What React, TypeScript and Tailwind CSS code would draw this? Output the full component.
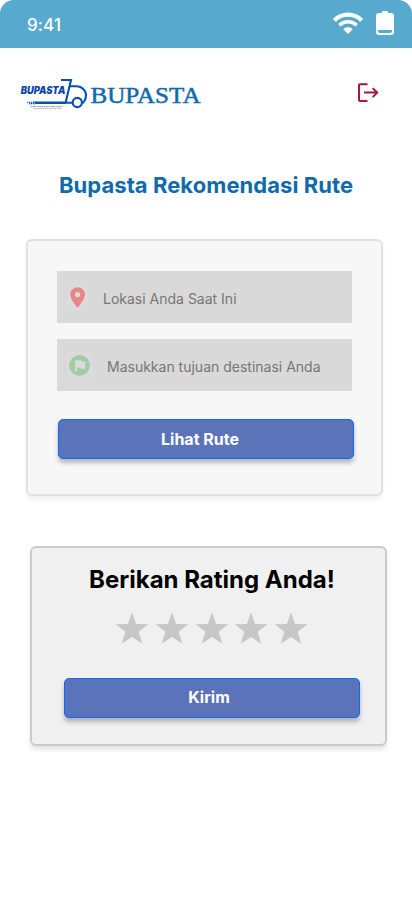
import React from "react";

function StatusBar() {
  return (
    <div className="flex h-12 items-center rounded-t-[14px] bg-[#57a9ce] pr-[18px] pb-[2px] pl-[27px]">
      <span className="mt-1 flex-1 text-[17px] leading-5 font-medium tracking-[0.1px] text-white">9:41</span>
      <svg className="mr-[13px] h-[22px] w-[30px]" viewBox="0 0 30 22" fill="none" stroke="#fff">
        <path d="M1.4 8.4C9 .8 21 .8 28.6 8.4" strokeWidth="4.2" />
        <path d="M6.3 13.2C11.2 8.5 18.8 8.5 23.7 13.2" strokeWidth="3.5" />
        <path d="M10.3 17.3C13 14.7 17 14.7 19.7 17.3L15 22Z" fill="#fff" stroke="none" />
      </svg>
      <svg className="h-6 w-[18px]" viewBox="0 0 18 24">
        <path d="M6 2V1.2Q6 0 7.2 0h3.6Q12 0 12 1.2V2h3Q18 2 18 5v16Q18 24 15 24H3Q0 24 0 21V5Q0 2 3 2Z" fill="#fff" />
        <path d="M2 19h14v1q0 2-2 2H4q-2 0-2-2Z" fill="#57a9ce" />
      </svg>
    </div>
  );
}

function Logo() {
  return (
    <svg className="h-10 w-[184px]" viewBox="20 74 184 40">
      <g fill="none" stroke="#0a4fb3" strokeWidth="2.1">
        <path d="M61 80H71L65.6 102.8H72.5" />
        <path d="M69.8 86.3H77Q84.5 87 86 94.5Q86 100.5 82.2 103.5" />
        <circle cx="77.3" cy="102.5" r="4.6" />
      </g>
      <path d="M33 101.6H66.2L65.8 104H36Z" fill="#0a4fb3" />
      <path d="M27 102.2H34M29 103.6H37" stroke="#0a4fb3" strokeWidth="1.1" strokeDasharray="1.3 .6" />
      <text x="20.8" y="94.4" textLength="44.5" lengthAdjust="spacingAndGlyphs" fill="#0a43a8" fontSize="9.8" fontWeight="900" fontStyle="italic" fontFamily="Inter, sans-serif">BUPASTA</text>
      <path d="M31 106.6H63" stroke="#888" strokeWidth="1" strokeDasharray="1.5 .6 2 .5 1 .7" />
      <path d="M33 108.6H62" stroke="#a5a5a5" strokeWidth=".9" strokeDasharray="1 .6 1.8 .5" />
      <text x="90.5" y="102.8" textLength="110" lengthAdjust="spacingAndGlyphs" fill="#0f6bab" stroke="#0f6bab" strokeWidth=".5" fontSize="23.5" fontFamily="'Liberation Serif', serif">BUPASTA</text>
    </svg>
  );
}

function LogoutIcon() {
  return (
    <svg className="h-5 w-[22px]" viewBox="0 0 22 20" fill="none" stroke="#ad1537" strokeWidth="2">
      <path d="M10.5 1.3H3Q2 1.3 2 2.3V17Q2 18 3 18H10.5M7 9.6H20.2M15.7 5.1L20.2 9.6L15.7 14.1" />
    </svg>
  );
}

function PinIcon() {
  return (
    <span className="flex h-[26px] w-[21px] items-center justify-center bg-[#dbdbdb]">
      <svg className="h-[21px] w-[15px]" viewBox="-.2 0 15.2 21">
        <path fillRule="evenodd" d="M7.5 0A7.4 7.4 0 0 0 .1 7.4C.1 12.5 7.5 21 7.5 21S14.9 12.5 14.9 7.4A7.4 7.4 0 0 0 7.5 0ZM7.5 4.8a2.7 2.7 0 1 1 0 5.4a2.7 2.7 0 0 1 0-5.4Z" fill="#e88585" />
      </svg>
    </span>
  );
}

function FlagIcon() {
  return (
    <span className="flex h-[26px] w-[26px] items-center bg-[#dbdbdb] pl-[2px]">
      <svg className="h-[21px] w-[21px]" viewBox="0 0 21 21">
        <circle cx="10.5" cy="10.5" r="10.4" fill="#a2cca5" />
        <path d="M6.2 5.3H12L12.5 6.5H16.1V13.8H11.5L11 12.5H7.9V16.6H6.2Z" fill="#dbdbdb" />
      </svg>
    </span>
  );
}

function Button({ className, children }: { className: string; children: React.ReactNode }) {
  return (
    <button className={`flex h-10 w-[296px] items-center justify-center rounded-[5px] border border-[#0a69ff] bg-[#5b73b8] text-base leading-5 font-bold text-white shadow-[0_4px_4px_rgba(0,0,0,0.25)] ${className}`}>
      {children}
    </button>
  );
}

function Star() {
  return (
    <svg className="h-8 w-8 overflow-visible" viewBox="0 0 32 32">
      <path d="M16 -.5L20.1 10.9L32.3 11.3L22.7 18.7L26.3 30.8L16 24L5.7 30.8L9.3 18.7L-.3 11.3L11.9 10.9Z" fill="#c7c7c7" />
    </svg>
  );
}

export default function App() {
  return (
    <main className="h-[917px] w-[412px] overflow-hidden bg-white font-['Inter',sans-serif]">
      <StatusBar />
      <header className="flex items-center justify-between pt-[26px] pr-[33px] pl-5">
        <Logo />
        <div className="mb-[3px]"><LogoutIcon /></div>
      </header>
      <h1 className="mt-[57px] text-center text-[22px] leading-7 font-bold tracking-[0.06px] text-[#0f6bab]">Bupasta Rekomendasi Rute</h1>

      <section className="mt-10 ml-[26px] h-[257px] w-[357px] rounded-md border-2 border-[#e1e1e1] bg-[#f7f7f7] pt-[30px] pl-[29px] shadow-[0_4px_4px_rgba(0,0,0,0.05)]">
        <div className="flex h-[52px] w-[295px] items-center bg-[#d9d9d9] pl-[10px] text-sm text-[#7b7474]">
          <PinIcon />
          <span className="mt-1 ml-[15px]">Lokasi Anda Saat Ini</span>
        </div>
        <div className="mt-4 flex h-[52px] w-[295px] items-center bg-[#d9d9d9] pl-[10px] text-sm text-[#7b7474]">
          <FlagIcon />
          <span className="mt-1 ml-[14px]">Masukkan tujuan destinasi Anda</span>
        </div>
        <div className="mt-7 ml-px"><Button className="pr-3">Lihat Rute</Button></div>
      </section>

      <section className="mt-[50px] ml-[30px] h-[200px] w-[357px] rounded-md border-2 border-[#cbcbcb] bg-[#f0f0f0] pt-[17px] shadow-[0_4px_4px_rgba(0,0,0,0.1)]">
        <h2 className="pl-[7px] text-center text-2xl leading-[30px] font-bold text-black">Berikan Rating Anda!</h2>
        <div className="mt-[18px] ml-[84px] flex gap-[7.8px]">
          <Star /><Star /><Star /><Star /><Star />
        </div>
        <div className="mt-[33px] ml-8"><Button className="pr-[6px] pb-[2px]">Kirim</Button></div>
      </section>
    </main>
  );
}
